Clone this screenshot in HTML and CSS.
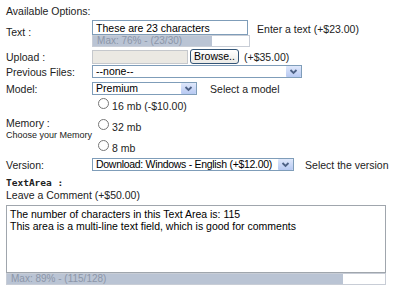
FILE: index.html
```html
<!DOCTYPE html>
<html>
<head>
    <title>Product Options</title>
    <link rel="stylesheet" href="styles.css">
</head>
<body>
    <div class="options">
        <div class="heading">Available Options:</div>
        <table class="opt-table">
            <tr class="row-text">
                <td class="lbl">Text :</td>
                <td class="field">
                    <div class="inline">
                        <div class="text-wrap">
                            <input type="text" class="txt" value="These are 23 characters">
                            <div class="meter short"><div class="fill" style="width: 76%"></div><span>Max: 76% - (23/30)</span></div>
                        </div>
                        <span class="note note-text">Enter a text (+$23.00)</span>
                    </div>
                </td>
            </tr>
            <tr class="row-upload">
                <td class="lbl">Upload :</td>
                <td class="field">
                    <div class="inline">
                        <div class="file-box"></div>
                        <button type="button" class="browse">Browse..</button>
                        <span class="price">(+$35.00)</span>
                    </div>
                </td>
            </tr>
            <tr class="row-prev">
                <td class="lbl">Previous Files:</td>
                <td class="field">
                    <div class="sel sel-wide">
                        <select><option>--none--</option></select>
                        <span class="arrow"><svg width="15" height="11" viewBox="0 0 15 11"><path d="M4.5 4l3 3 3-3" fill="none" stroke="#4d6185" stroke-width="1.8"/></svg></span>
                    </div>
                </td>
            </tr>
            <tr class="row-model">
                <td class="lbl">Model:</td>
                <td class="field">
                    <div class="inline">
                        <div class="sel sel-model">
                            <select><option>Premium</option></select>
                            <span class="arrow"><svg width="15" height="11" viewBox="0 0 15 11"><path d="M4.5 4l3 3 3-3" fill="none" stroke="#4d6185" stroke-width="1.8"/></svg></span>
                        </div>
                        <span class="note note-model">Select a model</span>
                    </div>
                </td>
            </tr>
            <tr class="row-memory">
                <td class="lbl">Memory :<div class="sub">Choose your Memory</div></td>
                <td class="field">
                    <label class="radio"><input type="radio" name="mem">16 mb (-$10.00)</label>
                    <label class="radio"><input type="radio" name="mem">32 mb</label>
                    <label class="radio"><input type="radio" name="mem">8 mb</label>
                </td>
            </tr>
            <tr class="row-version">
                <td class="lbl">Version:</td>
                <td class="field">
                    <div class="inline">
                        <div class="sel sel-version">
                            <select><option>Download: Windows - English (+$12.00)</option></select>
                            <span class="arrow"><svg width="15" height="11" viewBox="0 0 15 11"><path d="M4.5 4l3 3 3-3" fill="none" stroke="#4d6185" stroke-width="1.8"/></svg></span>
                        </div>
                        <span class="note note-version">Select the version</span>
                    </div>
                </td>
            </tr>
        </table>

        <div class="area-title">TextArea :</div>
        <div class="area-note">Leave a Comment (+$50.00)</div>
        <textarea class="comment">The number of characters in this Text Area is: 115
This area is a multi-line text field, which is good for comments</textarea>
        <div class="meter long"><div class="fill" style="width: 89%"></div><span>Max: 89% - (115/128)</span></div>
    </div>
</body>
</html>
```

FILE: styles.css
```css
body {
    margin: 0;
    padding: 0;
    font-family: "Liberation Sans", Arial, sans-serif;
    font-size: 10.5px;
    color: #222;
    background: #fff;
}
.options {
    padding: 4px 6px 0 6px;
}
.heading {
    height: 14px;
    line-height: 14px;
}
.opt-table {
    border-collapse: collapse;
    margin-top: 2px;
}
.opt-table td {
    padding: 0;
    vertical-align: middle;
}
.lbl {
    width: 85px;
    white-space: nowrap;
}
.inline {
    display: flex;
    align-items: center;
}
.note {
    white-space: nowrap;
}
.row-text td.lbl {
    padding-bottom: 3px;
}
.text-wrap {
    width: 158px;
}
.note-text {
    padding: 0 0 9px 7px;
}
.txt {
    display: block;
    box-sizing: border-box;
    width: 156px;
    height: 15px;
    margin: 0;
    padding: 0 3px;
    border: 1px solid #7f9db9;
    font-family: inherit;
    font-size: 10.5px;
    color: #000;
}
.meter {
    position: relative;
    box-sizing: border-box;
    height: 12px;
    border: 1px solid #c8cdd6;
    background: #fff;
    font-size: 10px;
    line-height: 10px;
    overflow: hidden;
}
.meter .fill {
    height: 100%;
    background: #bac4d4;
}
.meter span {
    position: absolute;
    left: 4px;
    top: 0;
    color: #8c96a8;
    white-space: nowrap;
}
.meter.short {
    width: 158px;
}
.row-upload td {
    padding-top: 2px;
}
.file-box {
    width: 96px;
    height: 14px;
    box-sizing: border-box;
    background: #ebe9e3;
    border: 1px solid #c5c8cc;
}
.browse {
    height: 15px;
    width: 49px;
    padding: 0;
    margin: 0 5px 0 2px;
    font-family: inherit;
    font-size: 10.5px;
    line-height: 13px;
    color: #000;
    border: 1px solid #335577;
    border-radius: 3px;
    background: linear-gradient(#ffffff, #ecebe6);
}
.row-prev td {
    padding-top: 1px;
}
.sel {
    position: relative;
    box-sizing: border-box;
    height: 13px;
}
.sel select {
    appearance: none;
    -webkit-appearance: none;
    display: block;
    box-sizing: border-box;
    width: 100%;
    height: 13px;
    margin: 0;
    padding: 0 3px;
    border: 1px solid #7f9db9;
    border-radius: 0;
    background: #fff;
    font-family: inherit;
    font-size: 10.5px;
    line-height: 11px;
    color: #000;
}
.sel .arrow {
    position: absolute;
    right: 1px;
    top: 1px;
    width: 15px;
    height: 11px;
    background: linear-gradient(#dfe8fb, #b7c9f2);
    border-radius: 1px;
}
.sel .arrow svg {
    display: block;
}
.sel-wide {
    width: 210px;
}
.sel-model {
    width: 105px;
}
.sel-version {
    width: 202px;
}
.sel-version select {
    letter-spacing: -0.3px;
}
.note-model {
    padding-left: 13px;
}
.note-version {
    padding-left: 11px;
}
.row-model td {
    padding-top: 4px;
}
.row-memory td.lbl {
    padding-top: 4px;
}
.sub {
    font-size: 9px;
    margin-top: 1px;
}
.radio {
    display: flex;
    align-items: center;
    height: 21px;
}
.radio input {
    width: 11px;
    height: 11px;
    margin: 0 3px 4px 6px;
}
.area-title {
    margin-top: 5px;
    font-family: "DejaVu Sans Mono", monospace;
    font-weight: bold;
    font-size: 9.5px;
    height: 13px;
    line-height: 13px;
}
.area-note {
    height: 13px;
    line-height: 13px;
}
.comment {
    display: block;
    box-sizing: border-box;
    width: 380px;
    height: 68px;
    margin: 3px 0 0 0;
    padding: 2px 3px;
    border: 1px solid #a0a6ad;
    font-family: inherit;
    font-size: 10.5px;
    line-height: 12px;
    color: #000;
    resize: none;
}
.meter.long {
    width: 380px;
}
```
